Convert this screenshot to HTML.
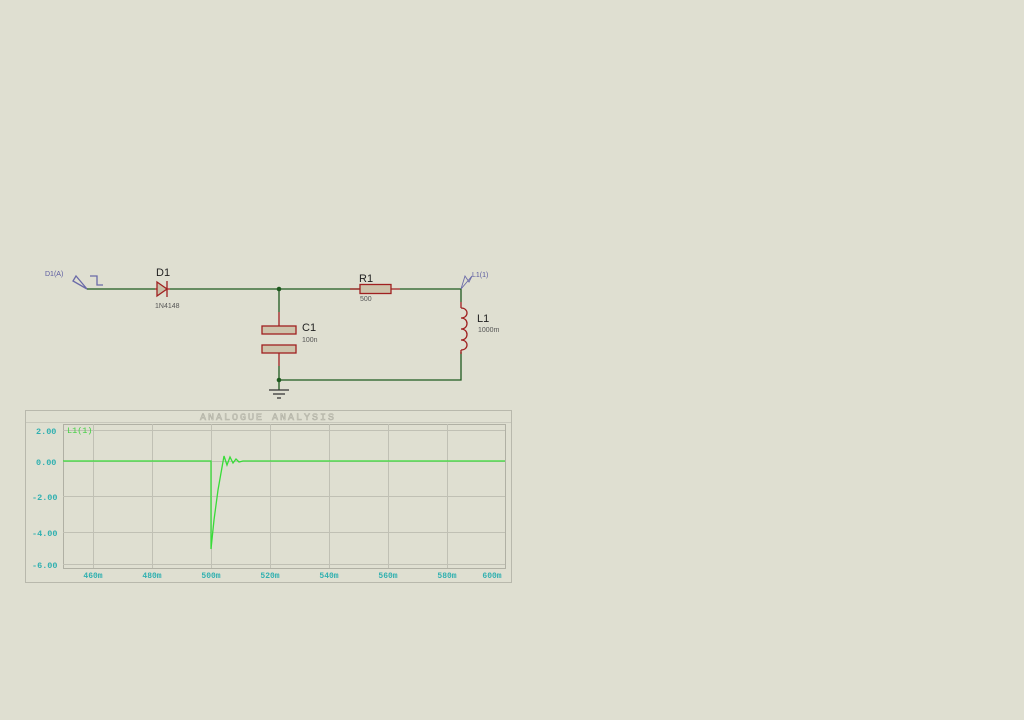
<!DOCTYPE html>
<html><head><style>
html,body{margin:0;padding:0;background:#dfdfd1;}
svg{display:block}
</style></head><body>
<svg width="1024" height="720" viewBox="0 0 1024 720" xmlns="http://www.w3.org/2000/svg" font-family="Liberation Sans, sans-serif">
<rect width="1024" height="720" fill="#dfdfd1"/>
<!-- circuit -->
<g fill="none" stroke-width="1.3">
<text x="45" y="276" font-size="7" fill="#5a5aa0" stroke="none">D1(A)</text>
<path d="M87 289 L73 281 L76 276 Z" stroke="#6a6aa8"/>
<path d="M90 276 H97 V285 H103" stroke="#6a6aa8"/>
<path d="M87 289 H155 M170 289 H360 M400 289 H461 V302 M461 352 V380 H279 M279 289 V312 M279 366 V390" stroke="#1f5a1f"/>
<path d="M155 289 H170 M350 289 H360 M391 289 H400 M461 302 V308 M461 350 V354 M279 312 V326 M279 353 V366" stroke="#a02020"/>
<path d="M157 282 L167 289 L157 296 Z M167 281 V297" stroke="#a02020" fill="#c8c0a8"/>
<rect x="360" y="284.5" width="31" height="9" fill="#cdc3ab" stroke="#a02020"/>
<rect x="262" y="326" width="34" height="8" fill="#cdc3ab" stroke="#a02020"/>
<rect x="262" y="345" width="34" height="8" fill="#cdc3ab" stroke="#a02020"/>
<path d="M461 308 c8 0 8 10 0 10 c8 0 8 11 0 11 c8 0 8 11 0 11 c8 0 8 10 0 10" stroke="#a02020"/>
<path d="M269 390 H289 M273 394 H285 M277 398 H281" stroke="#333"/>
<path d="M461 289 L472 276 L469 282 L465 276 Z" stroke="#6a6aa8" stroke-width="0.9"/>
<text x="472" y="277" font-size="7" fill="#5a5aa0" stroke="none">L1(1)</text>
</g>
<circle cx="279" cy="289" r="2.3" fill="#1f5a1f"/>
<circle cx="279" cy="380" r="2.3" fill="#1f5a1f"/>
<g fill="#222" font-size="11">
<text x="156" y="276">D1</text>
<text x="359" y="282">R1</text>
<text x="302" y="331">C1</text>
<text x="477" y="322">L1</text>
</g>
<g fill="#555" font-size="7">
<text x="155" y="308">1N4148</text>
<text x="360" y="301">500</text>
<text x="302" y="342">100n</text>
<text x="478" y="332">1000m</text>
</g>
<!-- graph -->
<rect x="25.5" y="410.5" width="486" height="172" fill="none" stroke="#b8b8ac"/>
<line x1="26" y1="422.5" x2="511" y2="422.5" stroke="#c8c8bc"/>
<text x="268" y="420" font-size="10" fill="none" stroke="#b0b0a4" stroke-width="0.6" text-anchor="middle" letter-spacing="2" font-family="Liberation Mono, monospace">ANALOGUE ANALYSIS</text>
<rect x="63.5" y="424.5" width="442" height="144" fill="none" stroke="#b0b0a4"/>
<g stroke="#c0c0b4" stroke-width="1">
<path d="M63 430.5H505 M63 461.5H505 M63 496.5H505 M63 532.5H505 M63 564.5H505"/>
<path d="M93.5 424V568 M152.5 424V568 M211.5 424V568 M270.5 424V568 M329.5 424V568 M388.5 424V568 M447.5 424V568"/>
</g>
<g font-family="Liberation Mono, monospace" font-size="8.5" font-weight="bold" fill="#30b0b0">
<text x="36" y="434">2.00</text>
<text x="36" y="465">0.00</text>
<text x="32" y="500">-2.00</text>
<text x="32" y="536">-4.00</text>
<text x="32" y="568">-6.00</text>
<g font-size="8" text-anchor="middle">
<text x="93" y="578">460m</text><text x="152" y="578">480m</text><text x="211" y="578">500m</text><text x="270" y="578">520m</text><text x="329" y="578">540m</text><text x="388" y="578">560m</text><text x="447" y="578">580m</text><text x="492" y="578">600m</text>
</g>
<text x="67" y="433" fill="#40d040" font-weight="normal">L1(1)</text>
</g>
<path d="M63 461 H211 V549 L214 520 L218 490 L224 456 L227 465 L230 457 L233 463 L236 459 L239 462 L243 461 H505" fill="none" stroke="#38dc38" stroke-width="1.3"/>
</svg>
</body></html>
